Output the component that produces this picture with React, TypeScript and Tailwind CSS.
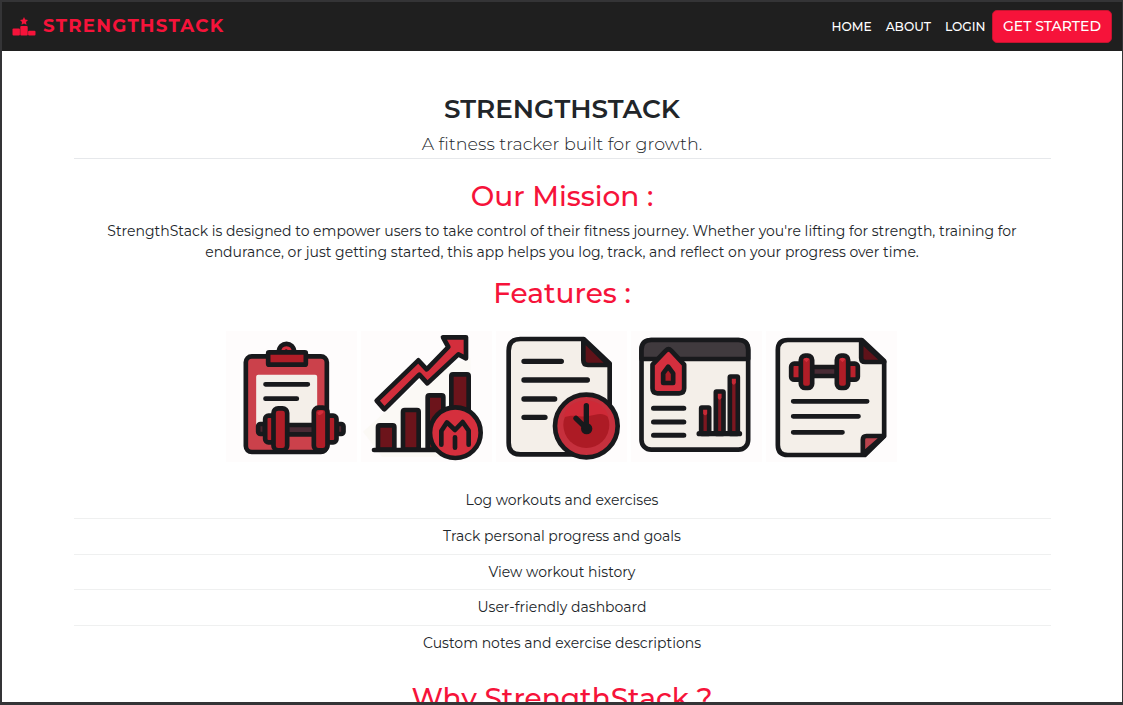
import React from "react";

const ink = "#18191c";

function Tile({ viewBox, children }: { viewBox: string; children: React.ReactNode }) {
  return (
    <svg
      className="h-[131px] w-[131px] shrink-0 bg-[#fefcfc]"
      viewBox={viewBox}
      fill="none"
      stroke={ink}
      strokeWidth={14}
      strokeLinecap="round"
      strokeLinejoin="round"
    >
      {children}
    </svg>
  );
}

function ClipboardIcon() {
  return (
    <Tile viewBox="17.5 18 393 393">
      <rect x="77" y="94" width="243" height="287" rx="18" fill="#cb414b" />
      <rect x="108" y="149" width="183" height="170" rx="6" fill="#f4efe9" stroke="none" />
      <path d="M176 82C176 48 222 48 222 82" fill="#d42f3e" />
      <circle cx="198" cy="78" r="5" fill={ink} stroke="none" />
      <rect x="144" y="82" width="113" height="37" rx="3" fill="#b01d27" />
      <path d="M136 178H263M136 221H230" />
      <rect x="114" y="297" width="20" height="30" rx="7" fill="#4c2731" />
      <rect x="350" y="297" width="20" height="30" rx="7" fill="#4c2731" />
      <rect x="200" y="300" width="84" height="28" fill="#492b35" />
      <rect x="135" y="272" width="28" height="80" rx="10" fill="#b01d27" />
      <rect x="319" y="272" width="30" height="80" rx="10" fill="#b01d27" />
      <rect x="160" y="250" width="41" height="126" rx="14" fill="#b01d27" />
      <rect x="281" y="248" width="41" height="128" rx="14" fill="#b01d27" />
      <path d="M291 263Q302 252 311 260Q305 270 295 270Z" fill="#d32e3b" stroke="none" />
    </Tile>
  );
}

function GrowthIcon() {
  return (
    <Tile viewBox="12 18 393 393">
      <path d="M18 320L220 140L340 100L342 270L270 395H75Z" fill="#fbf9f5" stroke="none" />
      <rect x="63" y="301" width="49" height="73" rx="5" fill="#6c141b" />
      <rect x="138" y="255" width="47" height="119" rx="5" fill="#6c141b" />
      <rect x="212" y="211" width="47" height="163" rx="5" fill="#6c141b" />
      <rect x="283" y="148" width="52" height="226" rx="5" fill="#6c141b" />
      <path d="M51 375H240" />
      <path
        d="M59 227L184 106L209 133L274 66L258 37H327V100L304 88L211 175L187 149L82 253Z"
        fill="#d32e3c"
      />
      <circle cx="295" cy="323" r="76" fill="#d52f3d" />
      <path d="M253 359V318L270 292L294 315L317 291L335 317V359M294 337V368" />
    </Tile>
  );
}

function HistoryIcon() {
  return (
    <Tile viewBox="12 18 393 393">
      <path d="M85 42H275L353 115V303L283 388H85Q50 388 50 353V77Q50 42 85 42Z" fill="#f4efe9" />
      <path d="M274 44V106Q274 120 288 120H352Z" fill="#5f1219" />
      <path d="M96 109H208M96 165H286M96 222H188M96 277H159" strokeWidth={16} />
      <circle cx="283" cy="303" r="94" fill="#c6303d" />
      <circle cx="283" cy="300" r="69" fill="#ad1b25" stroke="none" />
      <path d="M214 278C225 214 332 206 350 277C329 259 313 270 294 272C270 280 245 264 214 278Z" fill="#ce2937" stroke="none" />
      <circle cx="284" cy="311" r="17" fill={ink} stroke="none" />
      <path d="M283 242V310L252 280" strokeWidth={16} />
    </Tile>
  );
}

function DashboardIcon() {
  return (
    <Tile viewBox="14.5 18 393 393">
      <rect x="46" y="45" width="320" height="329" rx="29" fill="#f4efe9" />
      <path d="M46 102V74Q46 45 75 45H337Q366 45 366 74V102Z" fill="#403a3e" />
      <path d="M79 119L119 77Q127 69 135 77L174 119V190Q174 205 159 205H94Q79 205 79 190Z" fill="#d42f3e" />
      <path d="M111 174V145L126 125L141 145V174Z" fill="#ad1b25" />
      <path d="M82 250H173M82 291H173M82 331H173" strokeWidth={15} />
      <g fill="#7c1720">
        <rect x="225" y="248" width="24" height="79" rx="2" />
        <rect x="269" y="200" width="23" height="127" rx="2" />
        <rect x="311" y="155" width="24" height="172" rx="2" />
      </g>
      <path d="M231 254H243V266Q237 276 231 266ZM275 206H286V219Q280 230 275 219ZM317 161H329V174Q322 185 317 174Z" fill="#c52935" stroke="none" />
      <path d="M219 326H340" strokeWidth={16} />
    </Tile>
  );
}

function NotesIcon() {
  return (
    <Tile viewBox="17.5 18 393 393">
      <path d="M83 45H305L372 108V333L314 390H83Q53 390 53 360V75Q53 45 83 45Z" fill="#f4efe9" />
      <path d="M303 47V99Q303 111 315 111H372Z" fill="#5f1219" />
      <path d="M308 388V344Q308 333 319 333H371Z" fill="#b9444e" />
      <rect x="155" y="126" width="75" height="27" fill="#492b35" />
      <rect x="93" y="116" width="31" height="48" rx="9" fill="#bb222d" />
      <rect x="262" y="116" width="31" height="48" rx="9" fill="#bb222d" />
      <rect x="122" y="92" width="34" height="97" rx="13" fill="#b01d27" />
      <rect x="230" y="92" width="34" height="97" rx="13" fill="#b01d27" />
      <path d="M130 103Q139 94 147 103L139 112ZM238 103Q247 94 255 103L247 112Z" fill="#d32e3b" stroke="none" />
      <path d="M99 229H321M99 274H295M99 322H247" />
    </Tile>
  );
}

function PodiumLogo() {
  return (
    <svg className="h-[20px] w-[24px] shrink-0" viewBox="0 0 24 20" fill="#f6133a">
      <path d="M12 0L13.2 2.6L16 3L14 5L14.5 7.8L12 6.4L9.5 7.8L10 5L8 3L10.8 2.6Z" />
      <rect x="0.5" y="11.5" width="7.4" height="7" rx="1" />
      <rect x="8.3" y="9" width="7.4" height="9.5" rx="1" />
      <rect x="16.1" y="13.7" width="7.4" height="4.8" rx="1" />
    </svg>
  );
}

const features = [
  "Log workouts and exercises",
  "Track personal progress and goals",
  "View workout history",
  "User-friendly dashboard",
  "Custom notes and exercise descriptions",
];

export default function App() {
  return (
    <div className="flex h-[705px] w-[1123px] flex-col overflow-hidden border-t-2 border-r border-b-[3px] border-l-2 border-[#343436] bg-white font-[Montserrat,Inter,sans-serif] text-[#212529]">
      <header className="flex h-[49px] shrink-0 items-center bg-[#1f1f1f] px-[10px]">
        <a className="flex items-center gap-[7px] text-[#f6133a]">
          <PodiumLogo />
          <span className="-mt-px text-[18.2px] leading-6 font-bold tracking-[1.24px] whitespace-nowrap">STRENGTHSTACK</span>
        </a>
        <nav className="ml-auto flex items-center text-[12.25px] font-medium whitespace-nowrap text-white">
          <a className="mt-px mr-[14px]">HOME</a>
          <a className="mt-px mr-[14px]">ABOUT</a>
          <a className="mt-px mr-[6.5px]">LOGIN</a>
          <button className="h-[33px] w-[120px] rounded-[5px] border border-[#c4142f] bg-[#f6133a] text-[14px] font-medium">
            GET STARTED
          </button>
        </nav>
      </header>
      <main className="mx-auto flex w-[977px] flex-1 flex-col items-center overflow-hidden text-center whitespace-nowrap">
        <div className="flex w-full flex-col items-center border-b border-[#e6e8eb] pt-[42px]">
          <h1 className="text-[26.25px] leading-8 font-semibold">STRENGTHSTACK</h1>
          <p className="mt-[5px] h-[28px] text-[17.5px] leading-[28px] font-light">A fitness tracker built for growth.</p>
        </div>
        <h2 className="mt-[20px] text-[28px] leading-[34px] font-medium text-[#f6133a]">Our Mission :</h2>
        <p className="mt-[8px] text-[14px] leading-[21px]">
          StrengthStack is designed to empower users to take control of their fitness journey. Whether you're lifting for strength, training for
          <br />
          endurance, or just getting started, this app helps you log, track, and reflect on your progress over time.
        </p>
        <h2 className="mt-[13px] text-[28px] leading-[34px] font-medium text-[#f6133a]">Features :</h2>
        <div className="mt-[21px] flex gap-1 pr-px">
          <ClipboardIcon />
          <GrowthIcon />
          <HistoryIcon />
          <DashboardIcon />
          <NotesIcon />
        </div>
        <ul className="mt-[20.9px] w-full text-[14px]">
          {features.map((feature) => (
            <li
              key={feature}
              className="flex h-[35.85px] items-center justify-center border-b border-[#eff0f0] last:border-transparent"
            >
              {feature}
            </li>
          ))}
        </ul>
        <h2 className="mt-[18.8px] text-[28px] leading-[34px] font-medium text-[#f6133a]">Why StrengthStack ?</h2>
      </main>
    </div>
  );
}
